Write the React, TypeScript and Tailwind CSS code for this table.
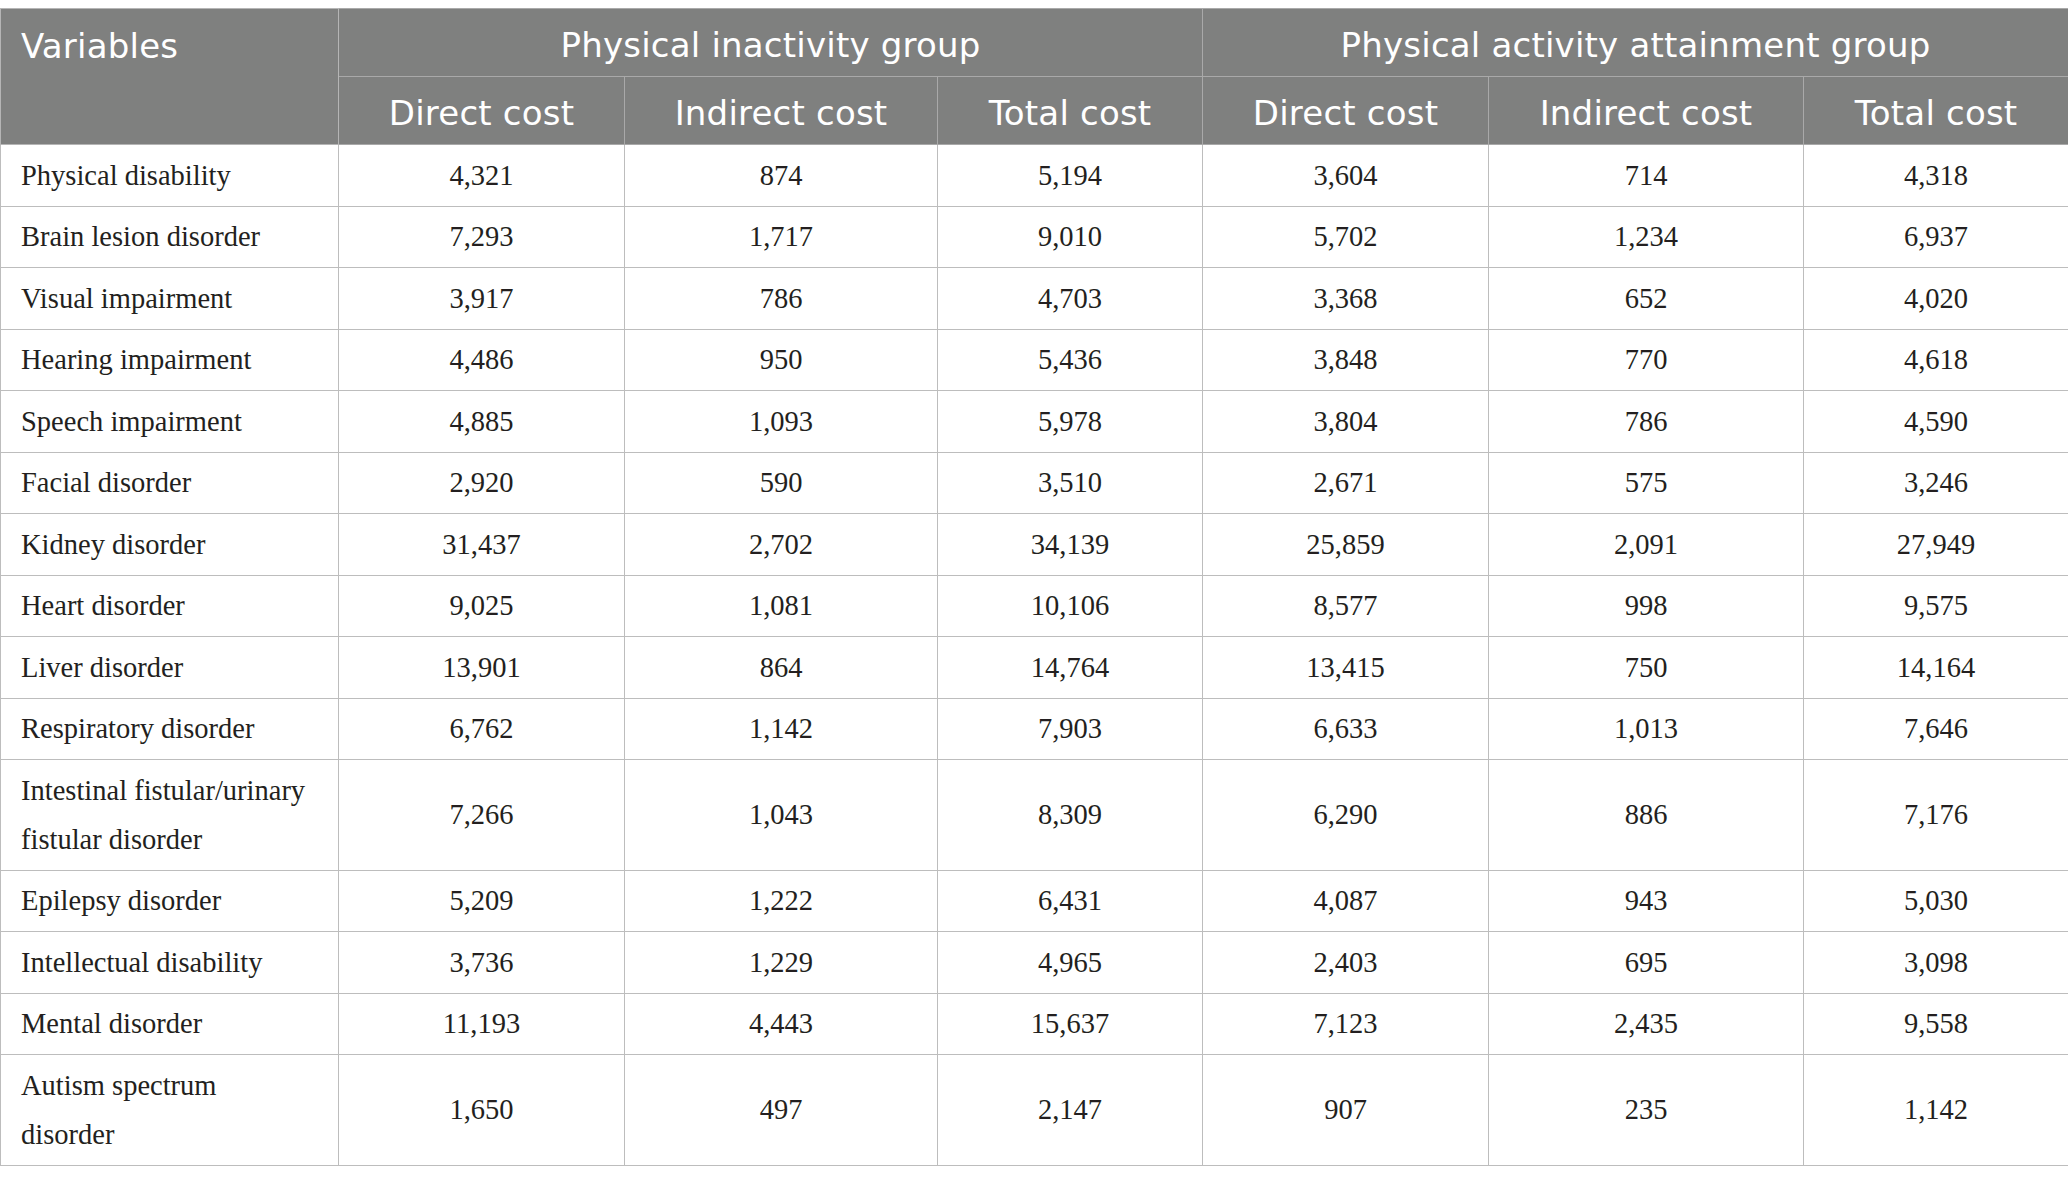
const ROWS: [string[], string[]][] = [
  [["Physical disability"], ["4,321", "874", "5,194", "3,604", "714", "4,318"]],
  [["Brain lesion disorder"], ["7,293", "1,717", "9,010", "5,702", "1,234", "6,937"]],
  [["Visual impairment"], ["3,917", "786", "4,703", "3,368", "652", "4,020"]],
  [["Hearing impairment"], ["4,486", "950", "5,436", "3,848", "770", "4,618"]],
  [["Speech impairment"], ["4,885", "1,093", "5,978", "3,804", "786", "4,590"]],
  [["Facial disorder"], ["2,920", "590", "3,510", "2,671", "575", "3,246"]],
  [["Kidney disorder"], ["31,437", "2,702", "34,139", "25,859", "2,091", "27,949"]],
  [["Heart disorder"], ["9,025", "1,081", "10,106", "8,577", "998", "9,575"]],
  [["Liver disorder"], ["13,901", "864", "14,764", "13,415", "750", "14,164"]],
  [["Respiratory disorder"], ["6,762", "1,142", "7,903", "6,633", "1,013", "7,646"]],
  [
    ["Intestinal fistular/urinary", "fistular disorder"],
    ["7,266", "1,043", "8,309", "6,290", "886", "7,176"],
  ],
  [["Epilepsy disorder"], ["5,209", "1,222", "6,431", "4,087", "943", "5,030"]],
  [["Intellectual disability"], ["3,736", "1,229", "4,965", "2,403", "695", "3,098"]],
  [["Mental disorder"], ["11,193", "4,443", "15,637", "7,123", "2,435", "9,558"]],
  [["Autism spectrum", "disorder"], ["1,650", "497", "2,147", "907", "235", "1,142"]],
];

const COL_WIDTHS = [338, 286, 313, 265, 286, 315, 265];
const SUB_HEADERS = ["Direct cost", "Indirect cost", "Total cost"];

export default function App() {
  return (
    <div className="min-h-screen bg-white pt-2">
      <table className="w-[2068px] table-fixed border-collapse">
        <colgroup>
          {COL_WIDTHS.map((w, i) => (
            <col key={i} style={{ width: w }} />
          ))}
        </colgroup>
        <thead className="bg-[#7f807f] font-['DejaVu_Sans',sans-serif] text-[34px] font-normal tracking-[0.2px] text-white">
          <tr className="h-[68px]">
            <th
              rowSpan={2}
              className="border border-[#b5b5b5] px-[20px] pt-[9px] text-left align-top font-normal leading-[56px]"
            >
              Variables
            </th>
            <th colSpan={3} className="border border-[#a9a9a9] pt-[6px] text-center font-normal">
              Physical inactivity group
            </th>
            <th colSpan={3} className="border border-[#a9a9a9] pt-[6px] text-center font-normal">
              Physical activity attainment group
            </th>
          </tr>
          <tr className="h-[68px]">
            {[...SUB_HEADERS, ...SUB_HEADERS].map((h, i) => (
              <th key={i} className="border border-[#a9a9a9] pt-[6px] text-center font-normal">
                {h}
              </th>
            ))}
          </tr>
        </thead>
        <tbody className="font-['Liberation_Serif',serif] text-[28.5px] text-[#231f20]">
          {ROWS.map(([lines, vals]) => (
            <tr key={lines.join(" ")}>
              <td className="border border-[#bdbdbd] py-[5.75px] pl-[20px] pr-[12px] leading-[49px]">
                {lines.map((l, i) => (
                  <div key={i}>{l}</div>
                ))}
              </td>
              {vals.map((v, i) => (
                <td
                  key={i}
                  className="border border-[#bdbdbd] py-[5.75px] text-center leading-[49px]"
                >
                  {v}
                </td>
              ))}
            </tr>
          ))}
        </tbody>
      </table>
    </div>
  );
}
